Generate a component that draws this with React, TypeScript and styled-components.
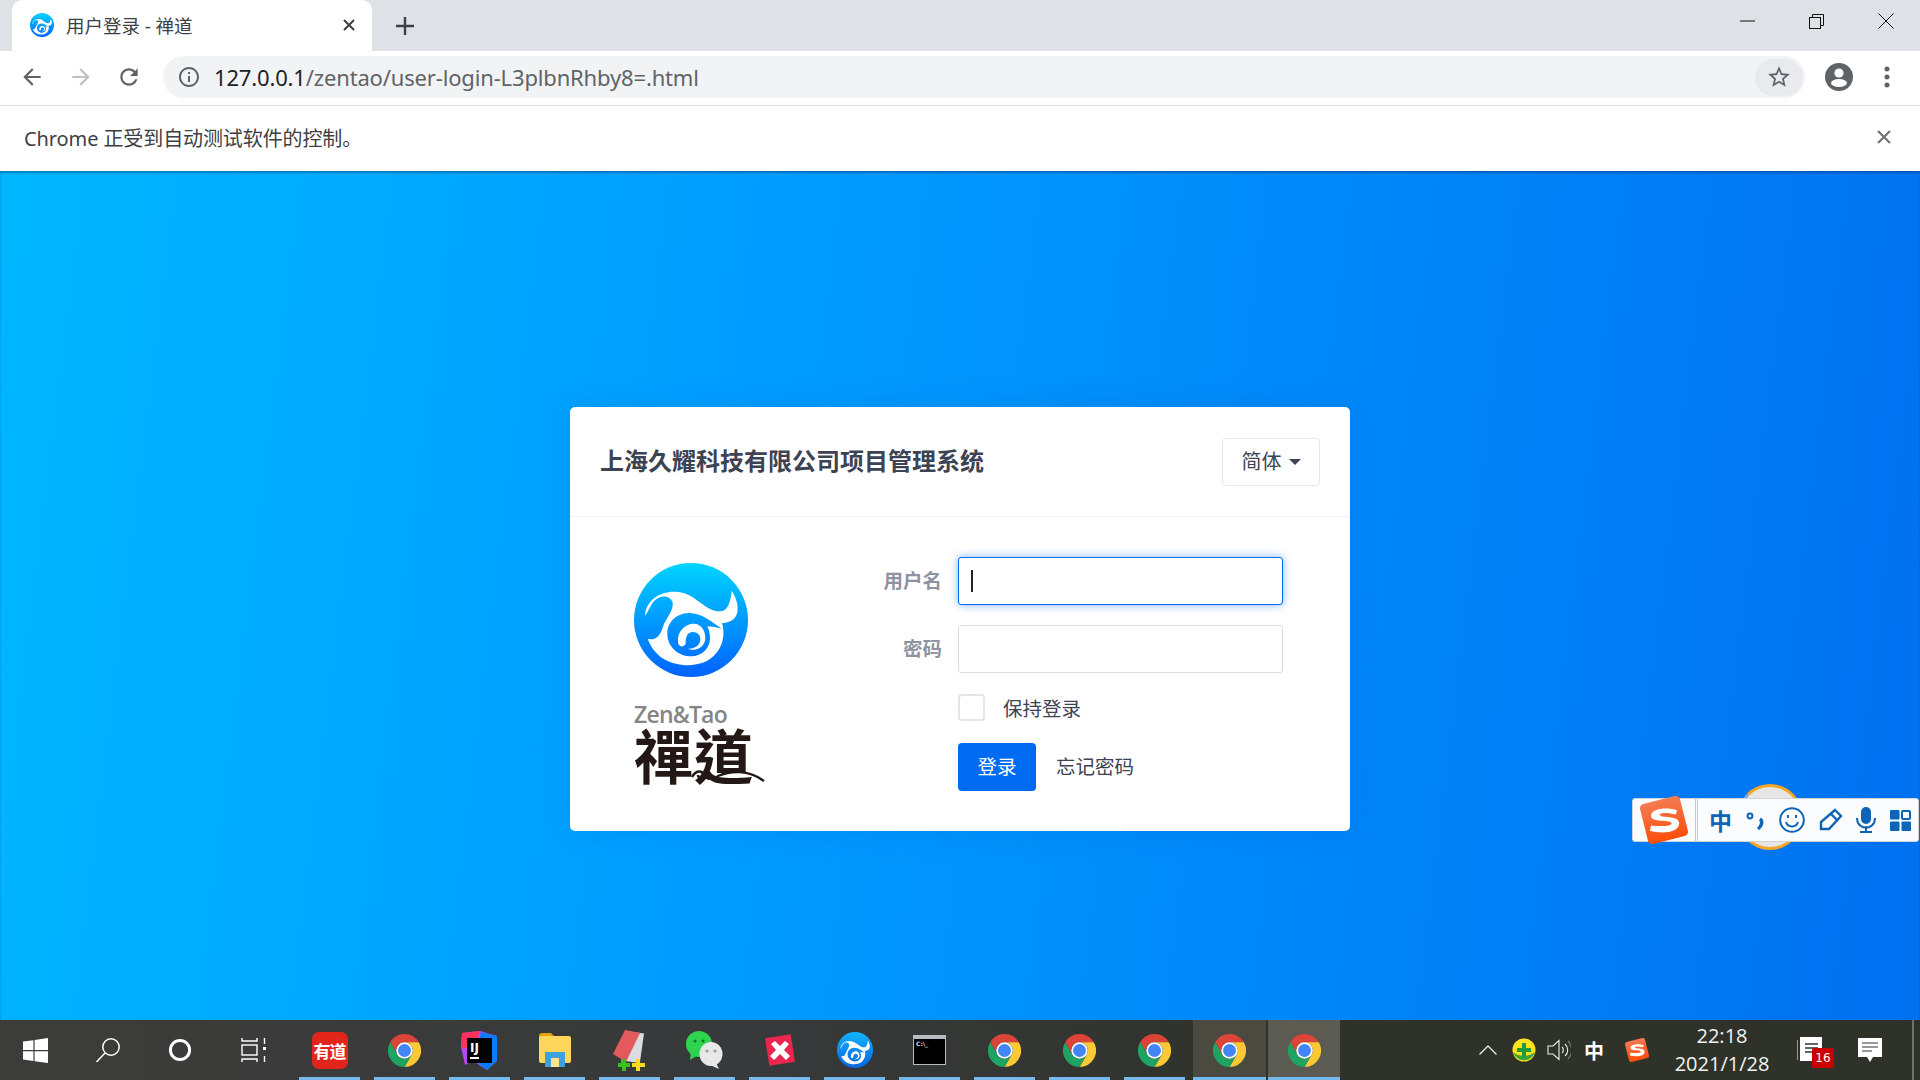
import { createGlobalStyle, styled } from 'styled-components';
import type { ReactNode } from 'react';

const CJK = `"Noto Sans", "Noto Sans CJK SC", sans-serif`;

const GlobalStyle = createGlobalStyle`
  html, body {
    margin: 0;
    padding: 0;
    width: 1920px;
    height: 1080px;
    overflow: hidden;
    font-family: ${CJK};
  }
  * { box-sizing: border-box; }
`;

const Screen = styled.div`
  width: 1920px;
  height: 1080px;
  display: flex;
  flex-direction: column;
  overflow: hidden;
`;

/* browser chrome */
const TabStrip = styled.div`
  height: 51px;
  flex: none;
  display: flex;
  align-items: flex-end;
  background: #dee1e6;
  padding-left: 12px;
`;

const Tab = styled.div`
  width: 360px;
  height: 51px;
  display: flex;
  align-items: center;
  padding: 0 17px 2px 18px;
  background: #fff;
  border-radius: 10px 10px 0 0;
  color: #3c4043;
`;

const TabTitle = styled.span`
  flex: 1;
  margin-left: 12px;
  font-size: 18.5px;
  white-space: nowrap;
`;

const NewTab = styled.div`
  width: 66px;
  height: 51px;
  display: flex;
  align-items: center;
  justify-content: center;
`;

const WindowControls = styled.div`
  margin-left: auto;
  height: 51px;
  display: flex;
  align-items: flex-start;
`;

const WindowButton = styled.div`
  width: 69px;
  height: 42px;
  display: flex;
  align-items: center;
  justify-content: center;
`;

const Toolbar = styled.div`
  height: 55px;
  flex: none;
  display: flex;
  align-items: center;
  background: #fff;
  border-bottom: 1px solid #dadce0;
  padding: 0 0 2px 8px;
`;

const NavButton = styled.div`
  width: 48.5px;
  height: 44px;
  display: flex;
  align-items: center;
  justify-content: center;
`;

const Omnibox = styled.div`
  margin-left: 9.5px;
  width: 1642px;
  height: 42px;
  display: flex;
  align-items: center;
  padding: 0 2px 0 14px;
  background: #f1f3f4;
  border-radius: 21px;
`;

const Url = styled.div`
  margin-left: 13px;
  font-size: 22px;
  letter-spacing: -0.16px;
  color: #5f6368;
  white-space: nowrap;
  b {
    font-weight: 400;
    color: #202124;
  }
`;

const StarButton = styled.div`
  margin-left: auto;
  width: 48px;
  height: 37px;
  display: flex;
  align-items: center;
  justify-content: center;
  background: #e8eaed;
  border-radius: 19px;
`;

const ToolbarEnd = styled.div`
  display: flex;
  align-items: center;
  margin-left: 20px;
  gap: 31px;
`;

const InfoBar = styled.div`
  height: 65px;
  flex: none;
  display: flex;
  align-items: center;
  justify-content: space-between;
  background: #fff;
  padding: 0 29px 3px 24px;
  font-size: 20px;
  letter-spacing: -0.1px;
  color: #3c4043;
`;

/* login page */
const Page = styled.main`
  position: relative;
  flex: 1;
  min-height: 0;
  display: flex;
  justify-content: center;
  align-items: flex-start;
  padding-top: 236px;
  background: linear-gradient(97deg, #00b6ff 0%, #009fff 35%, #0086f8 70%, #0070f0 100%);
  box-shadow: inset 0 2px 2px rgba(0, 30, 70, 0.35);
`;

const Card = styled.section`
  width: 780px;
  height: 424px;
  background: #fff;
  border-radius: 5px;
  color: #3c4353;
  box-shadow: 0 0 30px rgba(0, 60, 160, 0.12);
`;

const CardHeader = styled.header`
  height: 110px;
  display: flex;
  align-items: center;
  justify-content: space-between;
  padding: 0 30px;
  border-bottom: 1px solid #eff1f3;
`;

const CardTitle = styled.h1`
  margin: 0 0 2px;
  font-size: 24px;
  line-height: 32px;
  font-weight: 700;
  color: #3c4353;
`;

const LangButton = styled.div`
  width: 98px;
  height: 48px;
  display: flex;
  align-items: center;
  justify-content: center;
  gap: 7px;
  padding-bottom: 2px;
  border: 1px solid #e4e8ec;
  border-radius: 4px;
  font-size: 20px;
  &::after {
    content: '';
    margin-top: 2px;
    border-top: 6px solid #3c4353;
    border-left: 6px solid transparent;
    border-right: 6px solid transparent;
  }
`;

const CardBody = styled.div`
  display: flex;
  padding: 40px 0 0 64px;
`;

const Brand = styled.div`
  width: 224px;
  padding-top: 6px;
  display: flex;
  flex-direction: column;
`;

const BrandEn = styled.div`
  margin-top: 25px;
  font-size: 23px;
  line-height: 24px;
  font-weight: 600;
  font-family: 'Open Sans', sans-serif;
  letter-spacing: -0.8px;
  color: #858585;
`;

const BrandCn = styled.div`
  position: relative;
  width: 132px;
  height: 54px;
  margin-top: 1px;
  font-family: 'Noto Sans CJK TC', sans-serif;
  font-weight: 700;
  font-size: 59px;
  line-height: 54px;
  letter-spacing: 1px;
  white-space: nowrap;
  color: #231815;
`;

const Flourish = styled.svg`
  position: absolute;
  left: 56px;
  bottom: -2px;
`;

const Form = styled.div`
  display: grid;
  grid-template-columns: 84px 325px;
  column-gap: 16px;
  row-gap: 20px;
  grid-auto-rows: min-content;
  align-items: center;
`;

const Label = styled.div`
  text-align: right;
  padding-bottom: 3px;
  font-size: 19.5px;
  font-weight: 700;
  color: #8e939f;
`;

const Field = styled.div<{ $focused?: boolean }>`
  height: 48px;
  display: flex;
  align-items: center;
  padding-left: 12px;
  background: #fff;
  border: 1px solid ${(p) => (p.$focused ? '#006af1' : '#dcdcdc')};
  border-radius: 3px;
  box-shadow: ${(p) => (p.$focused ? '0 0 9px rgba(0, 106, 241, 0.5)' : 'none')};
`;

const Caret = styled.span`
  width: 1.5px;
  height: 22px;
  background: #222;
`;

const Remember = styled.div`
  grid-column: 2;
  height: 28px;
  display: flex;
  align-items: center;
  gap: 18px;
  margin-bottom: 2px;
  font-size: 19.5px;
  color: #3c4353;
`;

const CheckBox = styled.span`
  width: 27px;
  height: 27px;
  background: #fff;
  border: 2px solid #e5e5e5;
  border-radius: 4px;
`;

const Actions = styled.div`
  grid-column: 2;
  display: flex;
  align-items: center;
  gap: 20px;
  font-size: 19.5px;
`;

const ForgotLink = styled.span`
  padding-bottom: 4px;
`;

const LoginButton = styled.div`
  width: 78px;
  height: 48px;
  display: flex;
  align-items: center;
  justify-content: center;
  padding-bottom: 3px;
  background: #006af1;
  border-radius: 4px;
  color: #fff;
`;

/* sogou ime floating bar */
const ImeRing = styled.div`
  position: absolute;
  left: 1737px;
  top: 613px;
  width: 66px;
  height: 66px;
  border-radius: 50%;
  background: #e6e6e6;
  border: 3px solid #f5a623;
  border-left-color: #6aa5e8;
`;

const ImeBar = styled.div`
  position: absolute;
  left: 1632px;
  top: 627px;
  width: 287px;
  height: 44px;
  display: flex;
  align-items: center;
  background: #fbfcfe;
  border: 1px solid #d0d4d8;
  border-radius: 3px;
`;

const ImeLogoCell = styled.div`
  width: 65px;
  height: 100%;
  flex: none;
  display: flex;
  align-items: center;
  justify-content: center;
  border-right: 3px double #f3b6a4;
`;

const ImeTools = styled.div`
  flex: 1;
  display: flex;
  align-items: center;
  justify-content: space-between;
  padding: 0 7px 0 11px;
  color: #0e64b8;
`;

const ImeZh = styled.span`
  font-size: 23px;
  font-weight: 700;
  font-family: 'Noto Sans CJK SC', sans-serif;
  line-height: 1;
`;

/* windows taskbar */
const Taskbar = styled.footer`
  height: 60px;
  flex: none;
  display: flex;
  color: #fff;
  background: linear-gradient(90deg, #3c3d3a 0%, #37393a 40%, #2e3228 70%, #2e3228 100%);
`;

const TaskCell = styled.div<{ $width?: number; $state?: 'idle' | 'open' | 'hot' | 'active' }>`
  width: ${(p) => p.$width ?? 75}px;
  height: 60px;
  flex: none;
  display: flex;
  align-items: center;
  justify-content: center;
  background-color: ${(p) => (p.$state === 'hot' ? '#4a4a40' : p.$state === 'active' ? '#5c5b51' : 'transparent')};
  background-image: ${(p) =>
    !p.$state || p.$state === 'idle' ? 'none' : 'linear-gradient(#76b9ed, #76b9ed)'};
  background-repeat: no-repeat;
  background-position: center bottom;
  background-size: ${(p) => (p.$state === 'open' ? '61px 3px' : '100% 3px')};
  margin-right: ${(p) => (p.$state === 'hot' ? '2px' : '0')};
  margin-left: ${(p) => (p.$state === 'hot' ? '1px' : '0')};
`;

const Tray = styled.div`
  margin-left: auto;
  display: flex;
  align-items: center;
  height: 60px;
`;

const TrayCell = styled.div<{ $width: number }>`
  width: ${(p) => p.$width}px;
  height: 60px;
  flex: none;
  display: flex;
  align-items: center;
  justify-content: center;
`;

const TrayZh = styled.span`
  font-size: 20px;
  font-weight: 700;
  font-family: 'Noto Sans CJK SC', sans-serif;
`;

const Clock = styled.div`
  width: 112px;
  display: flex;
  flex-direction: column;
  align-items: center;
  font-size: 20px;
  line-height: 28px;
  font-family: 'Open Sans', sans-serif;
  color: #f4f4f4;
`;

const NoticeWrap = styled.div`
  position: relative;
  width: 24px;
  height: 26px;
`;

const NoticeBadge = styled.span`
  position: absolute;
  left: 15px;
  top: 11px;
  width: 22px;
  height: 20px;
  display: flex;
  align-items: center;
  justify-content: center;
  background: #c90000;
  border-radius: 2px;
  font-size: 12px;
  font-family: 'DejaVu Sans', sans-serif;
  color: #fff;
`;

const EdgeLine = styled.div`
  width: 2px;
  height: 60px;
  margin: 0 6px 0 9px;
  background: #6f716b;
  flex: none;
`;

const BadgeIcon = styled.div`
  width: 36px;
  height: 37px;
  display: flex;
  align-items: center;
  justify-content: center;
  background: #e1251b;
  border-radius: 7px;
  font-family: 'Noto Sans CJK SC', sans-serif;
  font-weight: 700;
  font-size: 17px;
  letter-spacing: -1px;
  color: #fff;
`;

const SvgLabel = styled.text`
  font-family: 'DejaVu Sans', sans-serif;
  font-weight: 700;
`;

function Mi({ d, size = 24, color = '#5f6368' }: { d: string; size?: number; color?: string }) {
  return (
    <svg width={size} height={size} viewBox="0 0 24 24" fill={color}>
      <path d={d} />
    </svg>
  );
}

const ARROW_BACK = 'M20 11H7.83l5.59-5.59L12 4l-8 8 8 8 1.41-1.41L7.83 13H20v-2z';
const ARROW_FWD = 'M12 4l-1.41 1.41L16.17 11H4v2h12.17l-5.58 5.59L12 20l8-8z';
const REFRESH =
  'M17.65 6.35C16.2 4.9 14.21 4 12 4c-4.42 0-7.99 3.58-7.99 8s3.57 8 7.99 8c3.73 0 6.84-2.55 7.73-6h-2.08c-.82 2.33-3.04 4-5.65 4-3.31 0-6-2.69-6-6s2.69-6 6-6c1.66 0 3.14.69 4.22 1.78L13 11h7V4l-2.35 2.35z';
const INFO =
  'M11 7h2v2h-2zm0 4h2v6h-2zm1-9C6.48 2 2 6.48 2 12s4.48 10 10 10 10-4.48 10-10S17.52 2 12 2zm0 18c-4.41 0-8-3.59-8-8s3.59-8 8-8 8 3.59 8 8-3.59 8-8 8z';
const STAR =
  'M22 9.24l-7.19-.62L12 2 9.19 8.63 2 9.24l5.46 4.73L5.82 21 12 17.27 18.18 21l-1.63-7.03L22 9.24zM12 15.4l-3.76 2.27 1-4.28-3.32-2.88 4.38-.38L12 6.1l1.71 4.04 4.38.38-3.32 2.88 1 4.28L12 15.4z';

/* Swirl mark, used big in the card, small in the tab and the taskbar */
function ZenMark({ size, id, dark }: { size: number; id: string; dark?: boolean }) {
  return (
    <svg width={size} height={size} viewBox="72 38 342 342">
      <defs>
        <linearGradient id={id} gradientUnits="userSpaceOnUse" x1="0" y1="38" x2="0" y2="380">
          <stop offset="0" stopColor={dark ? '#11b5ff' : '#00d4ff'} />
          <stop offset="1" stopColor={dark ? '#0a63e0' : '#0062ff'} />
        </linearGradient>
      </defs>
      <circle cx="243" cy="209" r="171" fill={`url(#${id})`} />
      <path
        d="M105 197C108 150 150 120 205 125C262 131 290 192 338 182C355 177 362 152 365 122C385 150 394 198 362 212C352 217 345 218 336 218C346 250 340 290 310 318C275 352 205 352 160 325C138 311 122 290 113 265C135 272 150 258 158 232C166 205 192 182 188 156C180 134 150 134 135 150C122 162 116 182 105 197Z"
        fill="#fff"
      />
      <path
        d="M335 235C308 216 272 186 235 188C198 190 172 216 172 250C172 290 206 318 244 318C276 318 300 294 300 264C300 250 297 238 292 228C306 229 320 231 335 235Z"
        fill={`url(#${id})`}
      />
      <path
        d="M205 280C198 244 226 220 252 220C272 220 286 240 286 262C286 282 270 298 250 298C244 298 238 297 234 295C256 296 271 284 271 267C271 254 262 245 249 245C235 245 226 256 227 280C220 292 210 290 205 280Z"
        fill="#fff"
      />
    </svg>
  );
}

function ChromeIcon({ size = 33 }: { size?: number }) {
  return (
    <svg width={size} height={size} viewBox="0 0 32 32">
      <path d="M29.86 8A16 16 0 0 0 2.14 8L9.07 20A8 8 0 0 1 16 8Z" fill="#db4437" />
      <path d="M29.86 8A16 16 0 0 1 16 32L22.93 20A8 8 0 0 0 16 8Z" fill="#fcc934" />
      <path d="M16 32A16 16 0 0 1 2.14 8L9.07 20A8 8 0 0 0 22.93 20Z" fill="#1ea362" />
      <circle cx="16" cy="16" r="8" fill="#fff" />
      <circle cx="16" cy="16" r="6.3" fill="#4285f4" />
    </svg>
  );
}

function SogouIcon({ size }: { size: number }) {
  return (
    <svg width={size} height={size} viewBox="0 0 48 48">
      <defs>
        <linearGradient id={`sg${size}`} x1="0" y1="0" x2="0" y2="1">
          <stop offset="0" stopColor="#f47b52" />
          <stop offset="1" stopColor="#fb4e0a" />
        </linearGradient>
      </defs>
      <rect x="5" y="5" width="38" height="38" rx="4" fill={`url(#sg${size})`} transform="rotate(-14 24 24)" />
      <path
        d="M36 15C28 12 12 13 12 20C12 27 31 23 31 27C31 30 20 30 12 29L11 34C22 37 38 36 38 27C38 19 20 23 20 19C20 17 29 17 35 19Z"
        fill="#fff"
      />
    </svg>
  );
}

function WinIcon() {
  return (
    <svg width="25" height="25" viewBox="0 0 25 25" fill="#fff">
      <path d="M0 3.6L10.4 2.2V12H0ZM11.6 2L25 0V12H11.6ZM0 13.2H10.4V23L0 21.5ZM11.6 13.2H25V25L11.6 23.2Z" />
    </svg>
  );
}

function SearchIcon() {
  return (
    <svg width="26" height="26" viewBox="0 0 26 26" fill="none" stroke="#fff" strokeWidth="1.5">
      <circle cx="16" cy="10" r="8.2" />
      <path d="M10 16L1.5 25" />
    </svg>
  );
}

function CortanaIcon() {
  return (
    <svg width="24" height="24" viewBox="0 0 24 24" fill="none" stroke="#fff" strokeWidth="3">
      <circle cx="12" cy="12" r="9.6" />
    </svg>
  );
}

function TaskViewIcon() {
  return (
    <svg width="26" height="24" viewBox="0 0 26 24" fill="none" stroke="#fff" strokeWidth="1.4">
      <rect x="1" y="7" width="15" height="10" />
      <path d="M1 0V3H16V0M1 24V21H16V24M23.5 0V6M23.5 18V24" />
      <rect x="22" y="9" width="3" height="3" fill="#fff" stroke="none" />
    </svg>
  );
}

function IdeaIcon() {
  return (
    <svg width="37" height="39" viewBox="0 0 37 39">
      <path d="M1 2L19 0L36 5V30L26 39L12 30L4 34L0 16Z" fill="#b74af7" />
      <path d="M1 2L19 0L13 20L0 16Z" fill="#fe315d" />
      <path d="M20 1L36 5V30L26 39L14 30Z" fill="#087cfa" />
      <rect x="6" y="7" width="25" height="25" fill="#000" />
      <SvgLabel x="9" y="21" fontSize="12" fill="#fff">
        IJ
      </SvgLabel>
      <rect x="9" y="26" width="9" height="2" fill="#fff" />
    </svg>
  );
}

function FolderIcon() {
  return (
    <svg width="32" height="34" viewBox="0 0 32 34">
      <path d="M0 3C0 1 1 0 3 0H12L15 3V8H0Z" fill="#e2a30c" />
      <rect x="0" y="3" width="32" height="27" rx="2" fill="#ffd65c" />
      <rect x="6" y="19" width="20" height="15" fill="#3fa0e0" />
      <rect x="12" y="25" width="8" height="9" fill="#ffe58a" />
    </svg>
  );
}

function NotepadIcon() {
  return (
    <svg width="34" height="42" viewBox="0 0 34 42">
      <rect x="11" y="3" width="18" height="30" fill="#d9dde2" transform="rotate(8 20 18)" />
      <path d="M12 1L27 4L13 33L0 25Z" fill="#e25a5c" />
      <path d="M8 30H13V34H17V38H13V42H9V38H5V34H8Z" fill="#3ac01c" />
      <path d="M23 30H27V34H32V38H27V42H23V38H19V34H23Z" fill="#ffd91c" />
    </svg>
  );
}

function WechatIcon() {
  return (
    <svg width="38" height="40" viewBox="0 0 38 40">
      <ellipse cx="13" cy="14" rx="13" ry="13" fill="#2ed44f" />
      <path d="M5 22L4 30L12 25Z" fill="#2ed44f" />
      <ellipse cx="25" cy="24" rx="11.5" ry="12" fill="#e8e8e8" />
      <path d="M30 33L33 39L24 35Z" fill="#e8e8e8" />
      <circle cx="9" cy="11" r="1.6" fill="#147a2c" />
      <circle cx="17" cy="11" r="1.6" fill="#147a2c" />
      <circle cx="21" cy="21" r="1.6" fill="#9a9a9a" />
      <circle cx="29" cy="21" r="1.6" fill="#9a9a9a" />
    </svg>
  );
}

function XmindIcon() {
  return (
    <svg width="32" height="34" viewBox="0 0 32 34">
      <rect x="3" y="3" width="26" height="28" fill="#e8264e" transform="rotate(-9 16 17)" />
      <path d="M7 11L11 8L16 13L21 8L25 11L20 17L26 23L22 27L16 21L10 27L6 23L12 17Z" fill="#fff" />
    </svg>
  );
}

function CmdIcon() {
  return (
    <svg width="33" height="30" viewBox="0 0 33 30">
      <rect width="33" height="30" fill="#b8bcc0" />
      <rect x="1" y="4" width="31" height="25" fill="#000" />
      <SvgLabel x="3" y="11" fontSize="6" fill="#ddd">
        C:\_
      </SvgLabel>
    </svg>
  );
}

function SystemTray() {
  return (
    <Tray>
      <TrayCell $width={36}>
        <svg width="18" height="10" viewBox="0 0 18 10" fill="none" stroke="#eee" strokeWidth="1.3">
          <path d="M0.5 9.5L9 1L17.5 9.5" />
        </svg>
      </TrayCell>
      <TrayCell $width={35}>
        <svg width="24" height="24" viewBox="0 0 24 24">
          <circle cx="12" cy="12" r="11.5" fill="#ffe21c" />
          <path d="M1 14A11.5 11.5 0 0 0 23 14C18 18 8 20 1 14Z" fill="#3aa53a" />
          <path d="M10 5H14V10H19V14H14V19H10V14H5V10H10Z" fill="#1e9a3a" />
        </svg>
      </TrayCell>
      <TrayCell $width={36}>
        <svg width="24" height="24" viewBox="0 0 24 24" fill="none" stroke="#eee" strokeWidth="1.1">
          <path d="M1 8H6L12 2.5V21.5L6 16H1Z" />
          <path d="M15 9A4 4 0 0 1 15 15" />
          <path d="M18 6A8 8 0 0 1 18 18" />
          <path d="M21 3A13 13 0 0 1 21 21" stroke="#777" />
        </svg>
      </TrayCell>
      <TrayCell $width={34}>
        <TrayZh>中</TrayZh>
      </TrayCell>
      <TrayCell $width={52}>
        <SogouIcon size={26} />
      </TrayCell>
      <TrayCell $width={118}>
        <Clock>
          <span>22:18</span>
          <span>2021/1/28</span>
        </Clock>
      </TrayCell>
      <TrayCell $width={56}>
        <NoticeWrap>
          <svg width="25" height="26" viewBox="0 0 25 26">
            <path d="M0 3V23" stroke="#fff" strokeWidth="1" />
            <rect x="3" y="0" width="22" height="24" fill="#fff" />
            <path d="M8 7H21M8 11H21M8 15H21" stroke="#333" strokeWidth="1.4" />
          </svg>
          <NoticeBadge>16</NoticeBadge>
        </NoticeWrap>
      </TrayCell>
      <TrayCell $width={66}>
        <svg width="24" height="24" viewBox="0 0 24 24">
          <path d="M0 0H24V19H15L12 24L9 19H0Z" fill="#fff" />
          <path d="M4 5H20M4 9H20M4 13H14" stroke="#333" strokeWidth="1.2" />
        </svg>
      </TrayCell>
      <EdgeLine />
    </Tray>
  );
}

const launchers: { key: string; icon: ReactNode; state: 'open' | 'hot' | 'active' }[] = [
  { key: 'youdao', icon: <BadgeIcon>有道</BadgeIcon>, state: 'open' },
  { key: 'chrome1', icon: <ChromeIcon />, state: 'open' },
  { key: 'idea', icon: <IdeaIcon />, state: 'open' },
  { key: 'files', icon: <FolderIcon />, state: 'open' },
  { key: 'notes', icon: <NotepadIcon />, state: 'open' },
  { key: 'wechat', icon: <WechatIcon />, state: 'open' },
  { key: 'xmind', icon: <XmindIcon />, state: 'open' },
  { key: 'zentao', icon: <ZenMark size={36} id="zen-task" dark />, state: 'open' },
  { key: 'cmd', icon: <CmdIcon />, state: 'open' },
  { key: 'chrome2', icon: <ChromeIcon />, state: 'open' },
  { key: 'chrome3', icon: <ChromeIcon />, state: 'open' },
  { key: 'chrome4', icon: <ChromeIcon />, state: 'open' },
  { key: 'chrome5', icon: <ChromeIcon />, state: 'hot' },
  { key: 'chrome6', icon: <ChromeIcon />, state: 'active' },
];

export default function App() {
  return (
    <Screen>
      <GlobalStyle />
      <TabStrip>
        <Tab>
          <ZenMark size={24} id="zen-tab" />
          <TabTitle>用户登录 - 禅道</TabTitle>
          <svg width="12" height="12" viewBox="0 0 12 12" stroke="#3c4043" strokeWidth="2">
            <path d="M1 1L11 11M11 1L1 11" />
          </svg>
        </Tab>
        <NewTab>
          <svg width="18" height="18" viewBox="0 0 18 18" stroke="#3c4043" strokeWidth="2.4">
            <path d="M9 0V18M0 9H18" />
          </svg>
        </NewTab>
        <WindowControls>
          <WindowButton>
            <svg width="15" height="2" viewBox="0 0 15 2" stroke="#111" strokeWidth="1">
              <path d="M0 1H15" />
            </svg>
          </WindowButton>
          <WindowButton>
            <svg width="15" height="15" viewBox="0 0 15 15" fill="none" stroke="#111" strokeWidth="1">
              <rect x="0.5" y="3.5" width="11" height="11" />
              <path d="M3.5 3.5V0.5H14.5V11.5H11.5" />
            </svg>
          </WindowButton>
          <WindowButton>
            <svg width="16" height="16" viewBox="0 0 16 16" stroke="#111" strokeWidth="1">
              <path d="M0.5 0.5L15.5 15.5M15.5 0.5L0.5 15.5" />
            </svg>
          </WindowButton>
        </WindowControls>
      </TabStrip>

      <Toolbar>
        <NavButton>
          <Mi d={ARROW_BACK} size={26} />
        </NavButton>
        <NavButton>
          <Mi d={ARROW_FWD} size={26} color="#bdc1c6" />
        </NavButton>
        <NavButton>
          <Mi d={REFRESH} size={26} />
        </NavButton>
        <Omnibox>
          <Mi d={INFO} size={24} />
          <Url>
            <b>127.0.0.1</b>/zentao/user-login-L3plbnRhby8=.html
          </Url>
          <StarButton>
            <Mi d={STAR} size={26} />
          </StarButton>
        </Omnibox>
        <ToolbarEnd>
          <svg width="28" height="28" viewBox="0 0 28 28">
            <circle cx="14" cy="14" r="14" fill="#5f6368" />
            <circle cx="14" cy="10" r="4.6" fill="#fff" />
            <ellipse cx="14" cy="20" rx="8" ry="4" fill="#fff" />
          </svg>
          <svg width="6" height="22" viewBox="0 0 6 22" fill="#5f6368">
            <circle cx="3" cy="3" r="2.5" />
            <circle cx="3" cy="11" r="2.5" />
            <circle cx="3" cy="19" r="2.5" />
          </svg>
        </ToolbarEnd>
      </Toolbar>

      <InfoBar>
        <span>Chrome 正受到自动测试软件的控制。</span>
        <svg width="14" height="14" viewBox="0 0 14 14" stroke="#707478" strokeWidth="2.2">
          <path d="M1 1L13 13M13 1L1 13" />
        </svg>
      </InfoBar>

      <Page>
        <Card>
          <CardHeader>
            <CardTitle>上海久耀科技有限公司项目管理系统</CardTitle>
            <LangButton>简体</LangButton>
          </CardHeader>
          <CardBody>
            <Brand>
              <ZenMark size={114} id="zen-card" />
              <BrandEn>Zen&amp;Tao</BrandEn>
              <BrandCn>
                禪道
                <Flourish width="76" height="16" viewBox="0 0 76 16" fill="none" stroke="#231815" strokeWidth="2.4">
                  <path d="M2 10C6 3 12 3 14 8C12 12 8 11 8 8M14 8C16 13 24 13 28 9C40 4 58 2 74 14" />
                </Flourish>
              </BrandCn>
            </Brand>
            <Form>
              <Label>用户名</Label>
              <Field $focused>
                <Caret />
              </Field>
              <Label>密码</Label>
              <Field />
              <Remember>
                <CheckBox />
                保持登录
              </Remember>
              <Actions>
                <LoginButton>登录</LoginButton>
                <ForgotLink>忘记密码</ForgotLink>
              </Actions>
            </Form>
          </CardBody>
        </Card>

        <ImeRing />
        <ImeBar>
          <ImeLogoCell>
            <SogouIcon size={52} />
          </ImeLogoCell>
          <ImeTools>
            <ImeZh>中</ImeZh>
            <svg width="20" height="22" viewBox="0 0 20 22" fill="none" stroke="#0e64b8" strokeWidth="2">
              <circle cx="4" cy="7" r="2.4" />
              <path d="M14 10C17 12 16 17 12 20" strokeWidth="3.4" />
            </svg>
            <svg width="26" height="26" viewBox="0 0 26 26" fill="none" stroke="#0e64b8" strokeWidth="2">
              <circle cx="13" cy="13" r="11.8" />
              <path d="M7 15C9 21 17 21 19 15" />
              <path d="M9 8V11M17 8V11" />
            </svg>
            <svg width="24" height="24" viewBox="0 0 24 24" fill="none" stroke="#0e64b8" strokeWidth="2.4">
              <path d="M16 2L22 8L10 21H2V14Z" />
              <path d="M12 6L18 12" />
            </svg>
            <svg width="20" height="26" viewBox="0 0 20 26" fill="#0e64b8">
              <rect x="5" y="0" width="10" height="17" rx="5" />
              <path d="M1 11C1 24 19 24 19 11" fill="none" stroke="#0e64b8" strokeWidth="2" />
              <rect x="9" y="19" width="2" height="6" />
              <rect x="4" y="24" width="12" height="2" />
            </svg>
            <svg width="21" height="21" viewBox="0 0 21 21" fill="#0e64b8">
              <rect width="9.5" height="9.5" rx="1" />
              <rect x="12" y="1" width="8" height="8" rx="1" fill="none" stroke="#0e64b8" strokeWidth="2" />
              <rect x="0" y="11.5" width="9.5" height="9.5" rx="1" />
              <rect x="11.5" y="11.5" width="9.5" height="9.5" rx="1" />
            </svg>
          </ImeTools>
        </ImeBar>
      </Page>

      <Taskbar>
        <TaskCell $width={70}>
          <WinIcon />
        </TaskCell>
        <TaskCell $width={75}>
          <SearchIcon />
        </TaskCell>
        <TaskCell $width={70}>
          <CortanaIcon />
        </TaskCell>
        <TaskCell $width={77}>
          <TaskViewIcon />
        </TaskCell>
        {launchers.map((item) => (
          <TaskCell key={item.key} $state={item.state} $width={item.state === 'hot' ? 73 : item.state === 'active' ? 72 : 75}>
            {item.icon}
          </TaskCell>
        ))}
        <SystemTray />
      </Taskbar>
    </Screen>
  );
}
